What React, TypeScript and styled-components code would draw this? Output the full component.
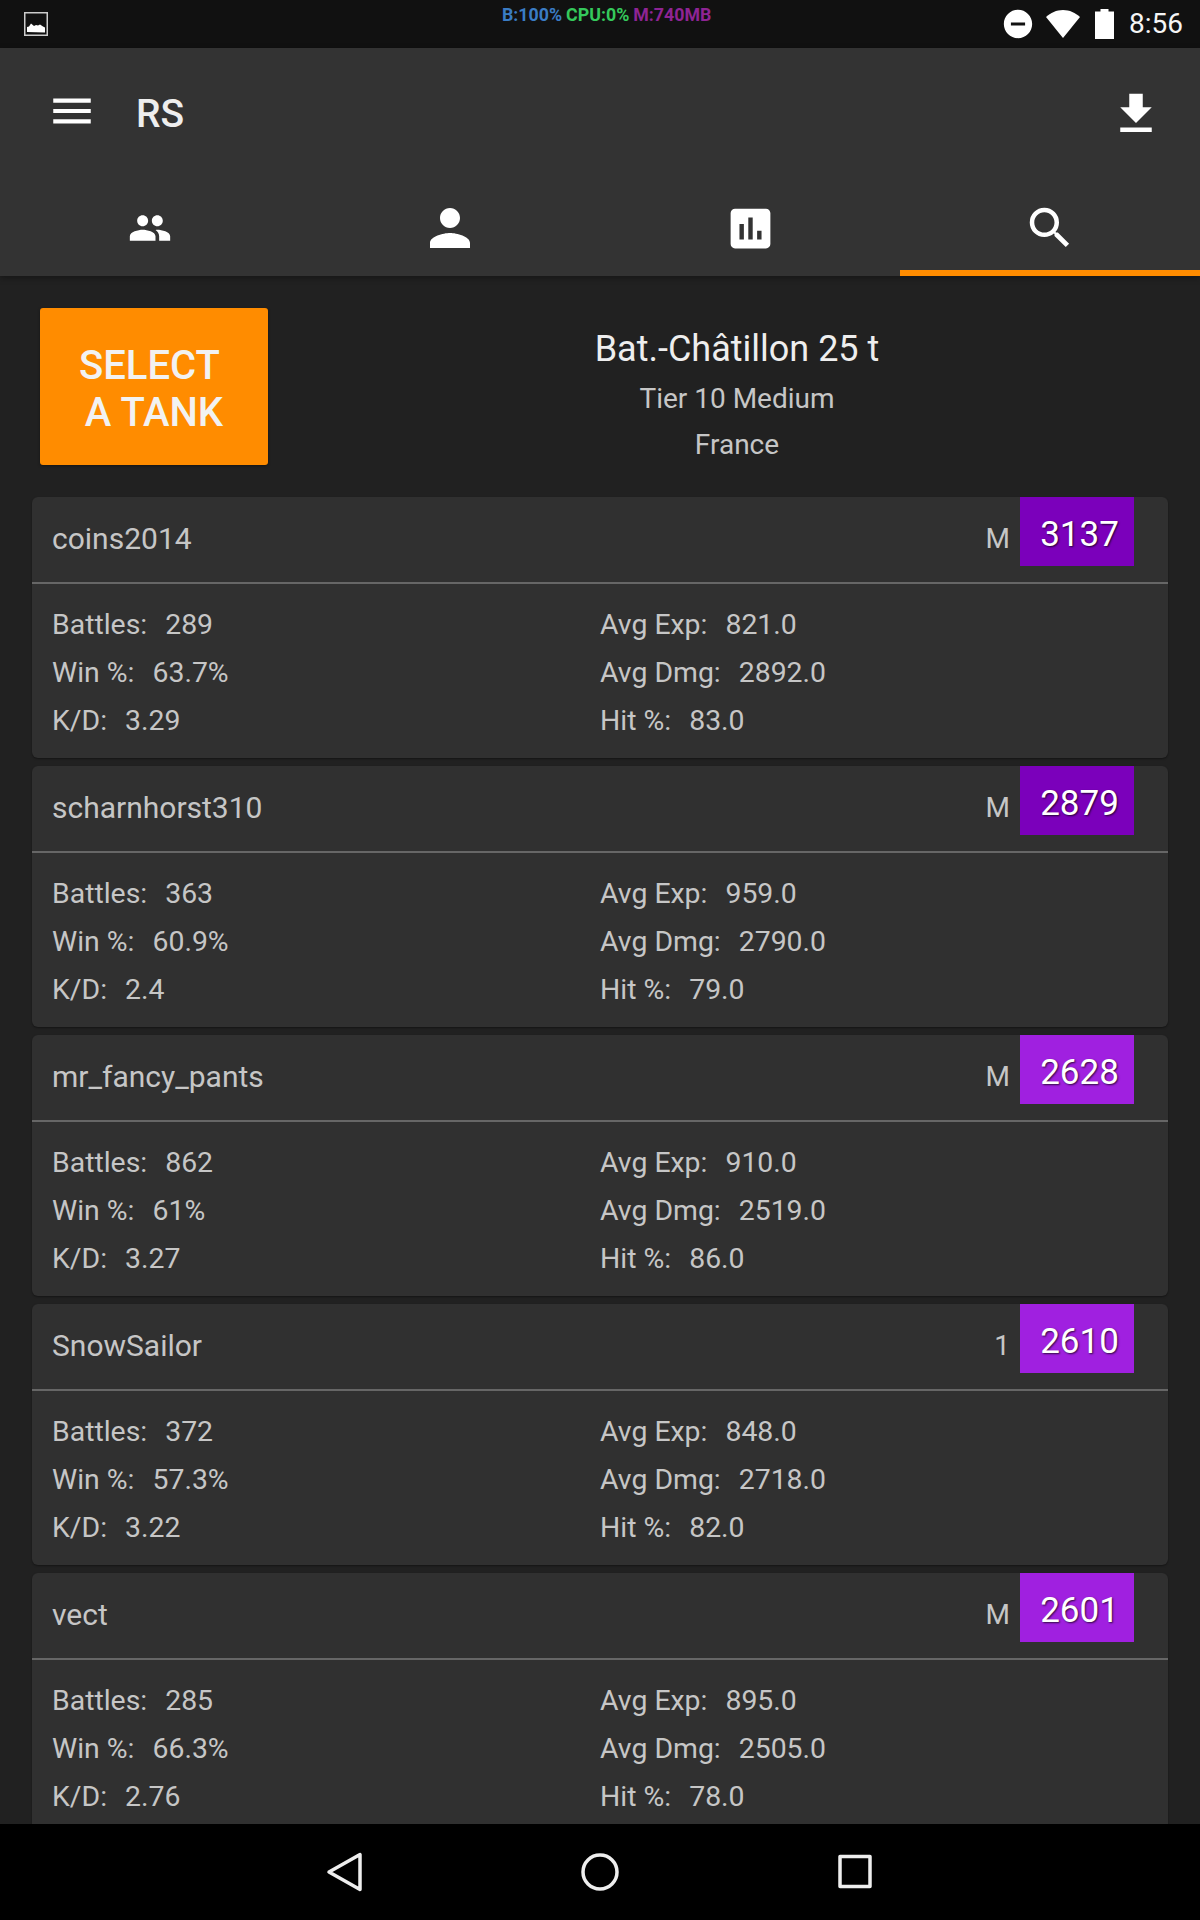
import React from 'react';
import styled, { createGlobalStyle } from 'styled-components';
import { MdMenu, MdFileDownload, MdPeople, MdPerson, MdAssessment, MdSearch, MdDoNotDisturbOn } from 'react-icons/md';

const GlobalStyle = createGlobalStyle`
  html, body {
    margin: 0;
    padding: 0;
    background: #212121;
    font-family: Roboto, "Noto Sans", sans-serif;
  }
`;

const Page = styled.div`
  width: 1200px;
  height: 1920px;
  display: flex;
  flex-direction: column;
  overflow: hidden;
  background: #212121;
`;

// Status bar
const StatusBar = styled.div`
  height: 48px;
  flex: 0 0 48px;
  background: #111;
  display: flex;
  position: relative;
  align-items: center;
  padding: 0 17px 0 24px;
  box-sizing: border-box;
`;

const ImageBox = styled.svg`
  width: 24px;
  height: 24px;
  display: block;
`;

const Monitor = styled.div`
  position: absolute;
  left: 502px;
  top: 5px;
  font-size: 17.8px;
  line-height: 20px;
  font-weight: 700;
  white-space: nowrap;
`;

const MonitorPart = styled.span<{ $color: string }>`
  color: ${(props) => props.$color};
  margin-right: 4px;
`;

const StatusRight = styled.div`
  margin-left: auto;
  display: flex;
  align-items: center;
  color: #fff;
`;

const WifiIcon = styled.svg`
  width: 36px;
  height: 30px;
  margin-left: 10px;
`;

const BatteryIcon = styled.svg`
  width: 19px;
  height: 30px;
  margin-left: 14px;
`;

const Clock = styled.span`
  font-size: 28px;
  line-height: 48px;
  margin-left: 15px;
  color: #f5f5f5;
`;

// App bar
const AppBar = styled.div`
  flex: 0 0 228px;
  height: 228px;
  background: #333;
  display: flex;
  flex-direction: column;
  box-shadow: 0 2px 6px rgba(0, 0, 0, 0.35);
  position: relative;
  z-index: 2;
`;

const Toolbar = styled.div`
  height: 128px;
  display: flex;
  align-items: center;
  padding: 0 37px 0 47px;
  color: #fff;
`;

const MenuWrap = styled.div`
  display: flex;
  padding-bottom: 2px;
`;

const Title = styled.div`
  font-size: 39px;
  font-weight: 500;
  color: #eee;
  margin-left: 39px;
  padding-top: 4px;
  flex: 1;
`;

const DownloadWrap = styled.div`
  display: flex;
  padding-top: 4px;
`;

const Tabs = styled.div`
  flex: 1;
  display: grid;
  grid-template-columns: repeat(4, 1fr);
`;

const Tab = styled.div<{ $active?: boolean }>`
  display: flex;
  align-items: center;
  justify-content: center;
  color: #fff;
  padding-top: 10px;
  box-sizing: border-box;
  border-bottom: 6px solid ${(props) => (props.$active ? '#ff8c00' : 'transparent')};
`;

// Content
const Content = styled.div`
  flex: 1;
  min-height: 0;
  overflow: hidden;
  padding: 32px 32px 0;
`;

const TankRow = styled.div`
  display: flex;
  align-items: stretch;
  height: 157px;
  margin-bottom: 32px;
`;

const SelectButton = styled.div`
  margin-left: 8px;
  width: 228px;
  padding-top: 5px;
  box-sizing: border-box;
  background: #ff8c00;
  border-radius: 3px;
  color: #f2f2f2;
  font-size: 40px;
  font-weight: 500;
  line-height: 47px;
  text-align: center;
  display: flex;
  align-items: center;
  justify-content: center;
  white-space: pre;
  box-shadow: 0 1px 3px rgba(0, 0, 0, 0.4);
`;

const TankInfo = styled.div`
  flex: 1;
  display: flex;
  flex-direction: column;
  align-items: center;
  padding-left: 38px;
  padding-top: 14px;
  color: #c6c6c6;
  font-size: 28px;
  line-height: 46px;
`;

const TankName = styled.div`
  color: #eee;
  font-size: 36px;
  line-height: 54px;
`;

const Card = styled.div`
  background: #303030;
  border-radius: 6px;
  height: 261px;
  margin-bottom: 8px;
  box-shadow: 0 1px 2px rgba(0, 0, 0, 0.4);
  color: #c6c6c6;
  font-size: 28.4px;
`;

const CardHeader = styled.div`
  height: 85px;
  border-bottom: 2px solid #666;
  display: flex;
  align-items: center;
  padding: 0 34px 0 20px;
`;

const PlayerName = styled.div`
  flex: 1;
  font-size: 30px;
  position: relative;
  top: -1px;
`;

const ClassMark = styled.div`
  margin-right: 10px;
  font-size: 28px;
  position: relative;
  top: -1px;
`;

const Score = styled.div<{ $color: string }>`
  align-self: flex-start;
  width: 114px;
  height: 69px;
  padding: 6px 0 0 5px;
  box-sizing: border-box;
  background: ${(props) => props.$color};
  color: #fff;
  font-size: 35px;
  line-height: 63px;
  text-align: center;
  text-shadow: 1px 1px 2px rgba(0, 0, 0, 0.7);
`;

const Stats = styled.div`
  display: grid;
  grid-template-columns: 1fr 1fr;
  grid-auto-rows: 48px;
  padding: 16px 20px 0;
`;

const Stat = styled.div`
  display: flex;
  align-items: center;
`;

const StatLabel = styled.span`
  margin-right: 18px;
`;

// Nav bar
const NavBar = styled.div`
  flex: 0 0 96px;
  height: 96px;
  background: #000;
  display: flex;
  align-items: center;
  justify-content: center;
  gap: 215px;
  padding-bottom: 1px;
  box-sizing: border-box;
`;

const NavIcon = styled.svg`
  width: 40px;
  height: 40px;
  fill: none;
  stroke: #eee;
  stroke-width: 3.5;
  stroke-linejoin: round;
  display: block;
`;

interface Player {
  name: string;
  mark: string;
  score: number;
  color: string;
  battles: number;
  win: string;
  kd: string;
  exp: string;
  dmg: string;
  hit: string;
}

const players: Player[] = [
  { name: 'coins2014', mark: 'M', score: 3137, color: '#7b00bb', battles: 289, win: '63.7%', kd: '3.29', exp: '821.0', dmg: '2892.0', hit: '83.0' },
  { name: 'scharnhorst310', mark: 'M', score: 2879, color: '#7b00bb', battles: 363, win: '60.9%', kd: '2.4', exp: '959.0', dmg: '2790.0', hit: '79.0' },
  { name: 'mr_fancy_pants', mark: 'M', score: 2628, color: '#a020e0', battles: 862, win: '61%', kd: '3.27', exp: '910.0', dmg: '2519.0', hit: '86.0' },
  { name: 'SnowSailor', mark: '1', score: 2610, color: '#a020e0', battles: 372, win: '57.3%', kd: '3.22', exp: '848.0', dmg: '2718.0', hit: '82.0' },
  { name: 'vect', mark: 'M', score: 2601, color: '#a020e0', battles: 285, win: '66.3%', kd: '2.76', exp: '895.0', dmg: '2505.0', hit: '78.0' },
];

const StatItem = ({ label, value }: { label: string; value: string | number }) => (
  <Stat>
    <StatLabel>{label}</StatLabel>
    <span>{value}</span>
  </Stat>
);

export default function App() {
  return (
    <Page>
      <GlobalStyle />

      <StatusBar>
        <ImageBox viewBox="0 0 24 24">
          <rect x="0.75" y="0.75" width="22.5" height="22.5" fill="none" stroke="#ccc" strokeWidth="1.5" />
          <path d="M3 20v-5l2-.5 2-3 3 2.500 2-1 2 .5 2-1 3 2 2 1v5z" fill="#fff" />
        </ImageBox>
        <Monitor>
          <MonitorPart $color="#3a7cc4">B:100%</MonitorPart>
          <MonitorPart $color="#35c95c">CPU:0%</MonitorPart>
          <MonitorPart $color="#8e2494">M:740MB</MonitorPart>
        </Monitor>
        <StatusRight>
          <MdDoNotDisturbOn size={34} />
          <WifiIcon viewBox="0 0 36 30">
            <path d="M18 29 1 8C5.500 3.800 11.500 1 18 1s12.500 2.800 17 7z" fill="#fff" />
          </WifiIcon>
          <BatteryIcon viewBox="0 0 19 30">
            <path d="M5.500 0h8v2.500H19V30H0V2.500h5.500z" fill="#fff" />
          </BatteryIcon>
          <Clock>8:56</Clock>
        </StatusRight>
      </StatusBar>

      <AppBar>
        <Toolbar>
          <MenuWrap>
            <MdMenu size={50} />
          </MenuWrap>
          <Title>RS</Title>
          <DownloadWrap>
            <MdFileDownload size={54} />
          </DownloadWrap>
        </Toolbar>
        <Tabs>
          <Tab><MdPeople size={44} /></Tab>
          <Tab><MdPerson size={60} /></Tab>
          <Tab><MdAssessment size={53} /></Tab>
          <Tab $active><MdSearch size={54} /></Tab>
        </Tabs>
      </AppBar>

      <Content>
        <TankRow>
          <SelectButton>{'SELECT \nA TANK'}</SelectButton>
          <TankInfo>
            <TankName>Bat.-Châtillon 25 t</TankName>
            <div>Tier 10 Medium</div>
            <div>France</div>
          </TankInfo>
        </TankRow>

        {players.map((player) => (
          <Card key={player.name}>
            <CardHeader>
              <PlayerName>{player.name}</PlayerName>
              <ClassMark>{player.mark}</ClassMark>
              <Score $color={player.color}>{player.score}</Score>
            </CardHeader>
            <Stats>
              <StatItem label="Battles:" value={player.battles} />
              <StatItem label="Avg Exp:" value={player.exp} />
              <StatItem label="Win %:" value={player.win} />
              <StatItem label="Avg Dmg:" value={player.dmg} />
              <StatItem label="K/D:" value={player.kd} />
              <StatItem label="Hit %:" value={player.hit} />
            </Stats>
          </Card>
        ))}
      </Content>

      <NavBar>
        <NavIcon viewBox="0 0 40 40">
          <path d="M35 2.500v35L4 20z" />
        </NavIcon>
        <NavIcon viewBox="0 0 40 40">
          <circle cx="20" cy="20" r="17" />
        </NavIcon>
        <NavIcon viewBox="0 0 40 40">
          <rect x="5" y="4.500" width="30" height="30" />
        </NavIcon>
      </NavBar>
    </Page>
  );
}
